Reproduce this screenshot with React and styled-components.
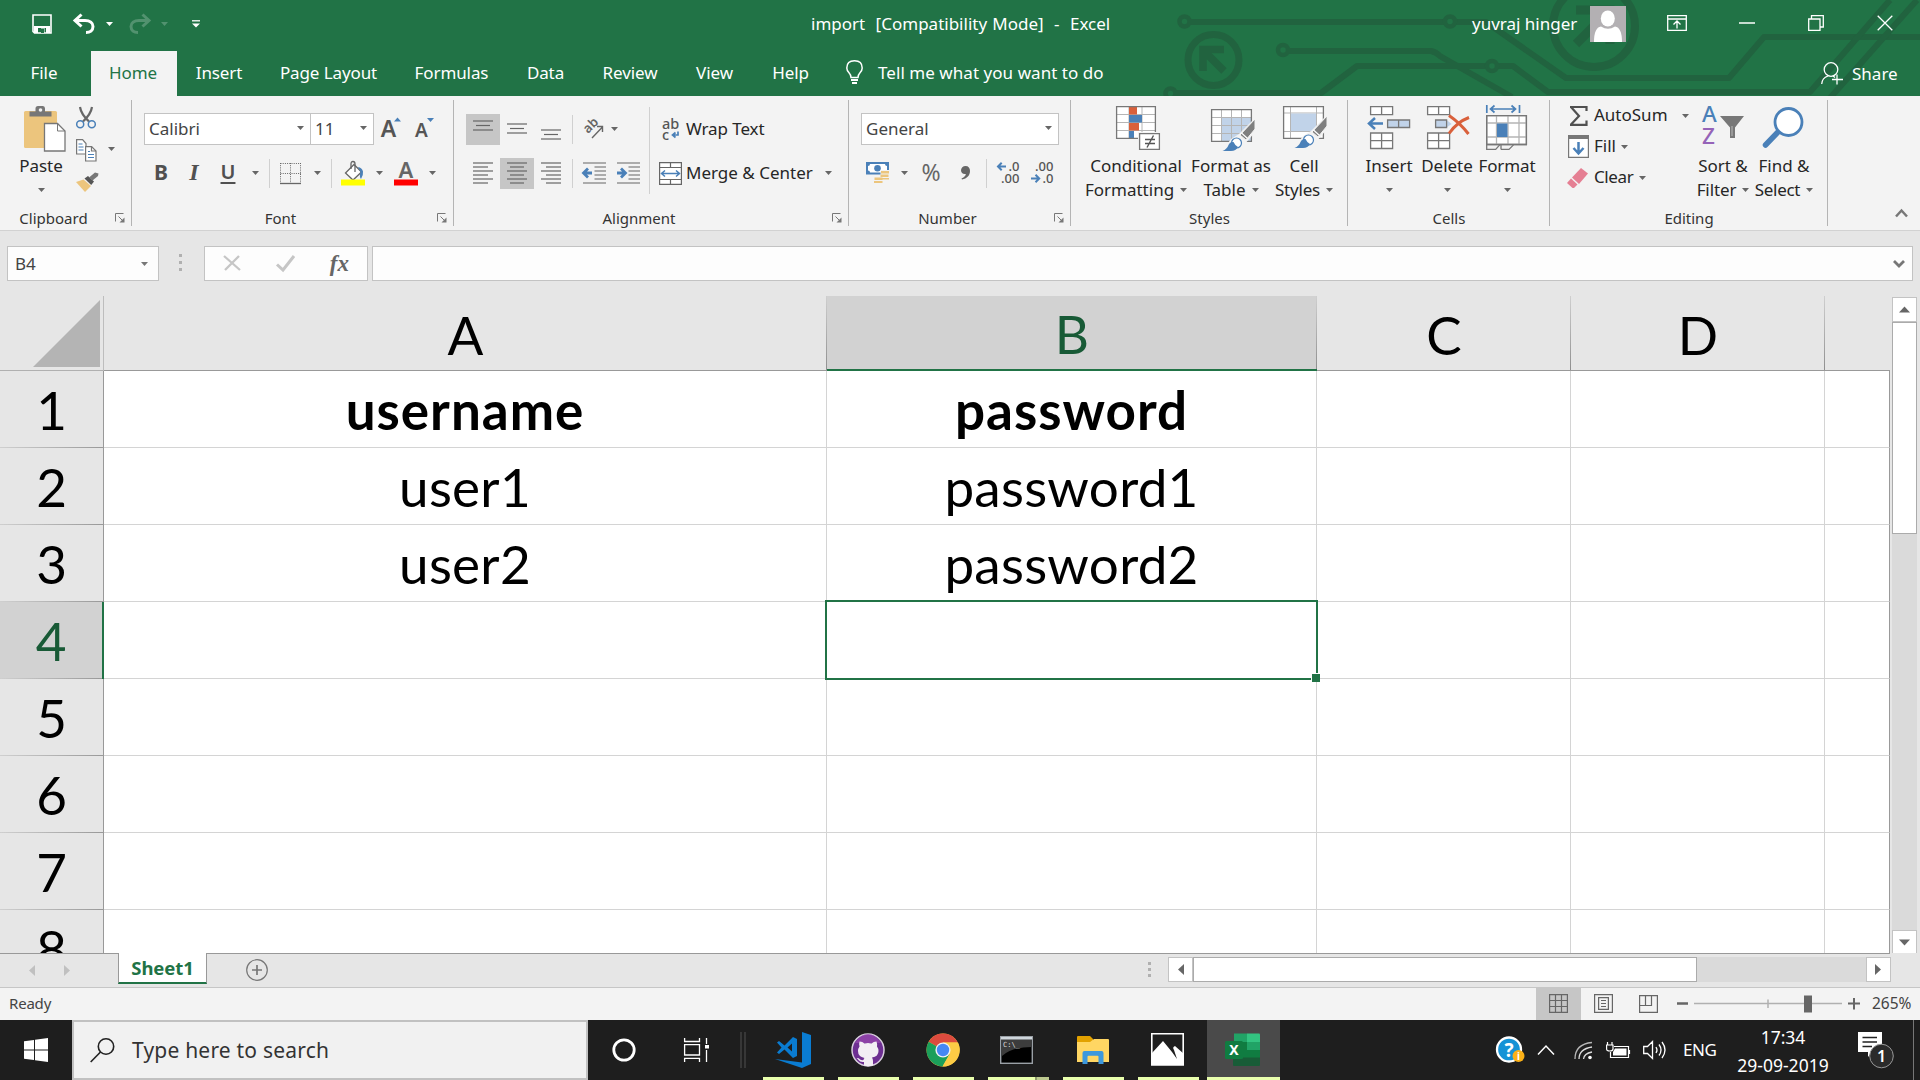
import React from "react";
import styled, { createGlobalStyle, css } from "styled-components";

const UI = `"Noto Sans", "Open Sans", sans-serif`;
const SHEET = `Lato, "Open Sans", sans-serif`;
const GREEN = "#217346";
const GREY = "#666666";
const BLUE = "#4a80b8";

const Global = createGlobalStyle`
  * { box-sizing: border-box; }
  html, body { margin: 0; padding: 0; overflow: hidden; }
  body { font-family: ${UI}; font-size: 17px; color: #262626; background: #e6e6e6; }
  svg { display: block; flex: none; overflow: visible; }
`;

const Screen = styled.div`
  width: 1920px;
  height: 1080px;
  display: flex;
  flex-direction: column;
  overflow: hidden;
`;

/* ---------- title area ---------- */
const Header = styled.header`
  position: relative;
  height: 96px;
  flex: none;
  background: ${GREEN};
  color: #fff;
  overflow: hidden;
`;
const Circuit = styled.svg`
  position: absolute;
  left: 0;
  top: 0;
`;
const HeaderContent = styled.div`
  position: relative;
  display: flex;
  flex-direction: column;
`;
const TitleBar = styled.div`
  height: 47px;
  display: flex;
  align-items: center;
`;
const QuickAccess = styled.div`
  width: 811px;
  display: flex;
  align-items: center;
  padding-left: 31px;
`;
const QuickIcon = styled.div`
  width: ${(p) => p.$w}px;
  margin-right: ${(p) => p.$mr || 0}px;
  opacity: ${(p) => (p.$dim ? 0.22 : 1)};
  display: flex;
  justify-content: center;
`;
const WindowTitle = styled.div`
  width: 661px;
  white-space: pre;
  letter-spacing: ${(p) => p.$ls || 0}px;
  word-spacing: 0.8px;
`;
const UserName = styled.div`
  width: 118px;
  white-space: nowrap;
`;
const Avatar = styled.div`
  width: 36px;
  height: 36px;
  background: #b3b0b3;
  overflow: hidden;
`;
const WindowButton = styled.div`
  width: ${(p) => p.$w}px;
  height: 47px;
  padding-bottom: 1px;
  display: flex;
  align-items: center;
  justify-content: center;
`;
const TabRow = styled.nav`
  height: 49px;
  display: flex;
  align-items: flex-end;
`;
const Tab = styled.div`
  width: ${(p) => p.$w}px;
  height: 45px;
  margin-left: ${(p) => p.$ml || 0}px;
  padding-bottom: 3px;
  display: flex;
  align-items: center;
  justify-content: center;
  white-space: nowrap;
  letter-spacing: ${(p) => p.$ls ?? -0.1}px;
  ${(p) => p.$active && css`background: #f3f3f3; color: ${GREEN}; padding-right: 2px;`}
`;
const TellMe = styled.div`
  height: 45px;
  width: 976px;
  padding-left: 18px;
  display: flex;
  align-items: center;
  gap: 15px;
  white-space: nowrap;
  padding-bottom: 3px;
  letter-spacing: 0.05px;
`;
const Share = styled.div`
  height: 45px;
  display: flex;
  align-items: center;
  gap: 9px;
  padding-left: 17px;
`;

/* ---------- ribbon ---------- */
const Ribbon = styled.section`
  height: 135px;
  flex: none;
  background: #f3f3f3;
  border-bottom: 1px solid #d2d2d2;
  display: flex;
`;
const Group = styled.div`
  width: ${(p) => p.$w}px;
  height: 134px;
  display: flex;
  flex-direction: column;
  background: linear-gradient(#b4b4b4, #b4b4b4) right 4px / 1px 126px no-repeat;
`;
const GroupBody = styled.div`
  height: 110px;
  display: flex;
  align-items: flex-start;
  padding-left: ${(p) => p.$pl || 0}px;
`;
const GroupFoot = styled.div`
  height: 24px;
  display: flex;
  align-items: center;
  font-size: 15px;
  color: #333;
`;
const GroupLabel = styled.div`
  flex: 1;
  text-align: center;
`;
const Launcher = styled.div`
  width: 25px;
  padding-left: 8px;
`;
const Stack = styled.div`
  width: ${(p) => p.$w}px;
  margin-left: ${(p) => p.$ml || 0}px;
  padding-top: ${(p) => p.$pt || 0}px;
  display: flex;
  flex-direction: column;
  flex: none;
  gap: ${(p) => p.$gap || 0}px;
`;
const ToolRow = styled.div`
  height: ${(p) => p.$h || 32}px;
  display: flex;
  align-items: center;
`;
const Tool = styled.div`
  width: ${(p) => p.$w || 34}px;
  height: 31px;
  margin-left: ${(p) => p.$ml || 0}px;
  padding-bottom: ${(p) => p.$pb || 0}px;
  display: flex;
  align-items: center;
  justify-content: center;
  flex: none;
  background: ${(p) => (p.$on ? "#c6c6c6" : "transparent")};
`;
const Rule = styled.div`
  width: 1px;
  height: ${(p) => p.$h || 29}px;
  margin-left: ${(p) => p.$ml || 0}px;
  margin-top: ${(p) => p.$mt || 0}px;
  background: #d0d0d0;
  flex: none;
`;
const Combo = styled.div`
  width: ${(p) => p.$w}px;
  height: 32px;
  margin-left: ${(p) => p.$ml || 0}px;
  border: 1px solid #c3c3c3;
  background: #fff;
  display: flex;
  align-items: center;
  justify-content: space-between;
  padding: 0 ${(p) => p.$pr || 6}px 2px 4px;
  color: #444;
`;
const ToolText = styled.div`
  width: ${(p) => p.$w}px;
  margin-left: ${(p) => p.$ml || 0}px;
  padding-bottom: 2px;
  white-space: nowrap;
  letter-spacing: ${(p) => p.$ls || 0}px;
`;
const BigButton = styled.div`
  width: ${(p) => p.$w}px;
  margin-left: ${(p) => p.$ml || 0}px;
  padding-top: 8px;
  display: flex;
  flex-direction: column;
  align-items: center;
  flex: none;
`;
const BigIcon = styled.div`
  height: 50px;
  display: flex;
  padding-left: ${(p) => p.$pl || 0}px;
`;
const BigLine = styled.div`
  height: 24px;
  line-height: 24px;
  display: flex;
  align-items: center;
  gap: 6px;
  white-space: nowrap;
  letter-spacing: ${(p) => p.$ls || 0}px;
`;
const Glyph = styled.span`
  font-family: ${(p) => p.$font || UI};
  font-size: ${(p) => p.$size || 20}px;
  font-weight: ${(p) => p.$weight || 400};
  font-style: ${(p) => p.$style || "normal"};
  text-decoration: ${(p) => (p.$under ? "underline" : "none")};
  text-decoration-thickness: 1.5px;
  text-underline-offset: 3px;
  color: ${(p) => p.$color || "#505050"};
  line-height: 1;
`;
const Collapse = styled.div`
  flex: 1;
  display: flex;
  align-items: flex-end;
  padding: 0 0 13px 67px;
`;

/* ---------- formula bar ---------- */
const FormulaBar = styled.div`
  height: 65px;
  flex: none;
  padding: 15px 7px 0;
  display: flex;
  background: #e6e6e6;
`;
const Field = styled.div`
  width: ${(p) => p.$w}px;
  height: 35px;
  margin-left: ${(p) => p.$ml || 0}px;
  padding: ${(p) => p.$pad || "0"};
  background: #fdfdfd;
  border: 1px solid #c3c3c3;
  display: flex;
  align-items: center;
  justify-content: ${(p) => p.$justify || "space-between"};
  color: #444;
`;
const Dots = styled.div`
  width: 3px;
  height: ${(p) => p.$h || 17}px;
  margin: ${(p) => p.$margin || "0"};
  display: flex;
  flex-direction: column;
  justify-content: space-between;
  &::before, &::after, i { content: ""; width: 3px; height: 3px; background: #b0b0b0; }
`;

/* ---------- worksheet ---------- */
const SheetArea = styled.main`
  height: 657px;
  flex: none;
  display: flex;
  background: #e6e6e6;
`;
const Grid = styled.div`
  width: 1890px;
  height: 657px;
  display: grid;
  grid-template-columns: 104px 723px 490px 254px 254px 65px;
  grid-template-rows: 75px repeat(7, 77px) 43px;
  overflow: hidden;
  font-family: ${SHEET};
  font-size: 53px;
  color: #000;
`;
const Corner = styled.div`
  border-bottom: 1px solid #b0b0b0;
  border-right: 1px solid #bdbdbd;
  padding: 4px 0 0 33px;
`;
const ColHead = styled.div`
  display: flex;
  align-items: center;
  justify-content: center;
  padding-top: 2px;
  line-height: 1;
  border-bottom: ${(p) => (p.$on ? `2px solid ${GREEN}` : "1px solid #999")};
  color: ${(p) => (p.$on ? "#185a36" : "#000")};
  background:
    ${(p) => (p.$last ? "" : "linear-gradient(#cfcfcf, #8f8f8f) right top / 1px 100% no-repeat,")}
    ${(p) => (p.$on ? "#d2d2d2" : "#e6e6e6")};
`;
const RowHead = styled.div`
  display: flex;
  align-items: flex-start;
  justify-content: center;
  padding-top: 12px;
  line-height: 1;
  border-right: ${(p) => (p.$on ? `2px solid ${GREEN}` : "1px solid #999")};
  color: ${(p) => (p.$on ? "#185a36" : "#000")};
  overflow: hidden;
  background:
    linear-gradient(90deg, #cfcfcf, #999) left bottom / 100% ${(p) => (p.$cut ? 0 : 1)}px no-repeat,
    ${(p) => (p.$on ? "#d2d2d2" : "#e6e6e6")};
`;
const Cell = styled.div`
  position: relative;
  display: flex;
  align-items: flex-start;
  justify-content: center;
  padding-top: 12px;
  line-height: 1;
  background: #fff;
  border-right: 1px solid ${(p) => (p.$last ? "#999" : "#d4d4d4")};
  border-bottom: ${(p) => (p.$cut ? 0 : 1)}px solid #d4d4d4;
  font-weight: ${(p) => (p.$bold ? 700 : 400)};
  letter-spacing: ${(p) => (p.$bold ? 1 : 0.25)}px;
`;
const Selection = styled.div`
  position: absolute;
  left: -2px;
  top: -2px;
  width: 493px;
  height: 80px;
  border: 2px solid ${GREEN};
  z-index: 2;
  &::after {
    content: "";
    position: absolute;
    right: -4px;
    bottom: -4px;
    width: 8px;
    height: 8px;
    background: ${GREEN};
    border: 1px solid #fff;
    border-width: 1px 0 0 1px;
  }
`;
const VScroll = styled.div`
  width: 25px;
  margin: 1px 0 0 2px;
  height: 658px;
  display: flex;
  flex-direction: column;
  background: #dadada;
`;
const ScrollButton = styled.div`
  width: 25px;
  height: 25px;
  flex: none;
  background: #fff;
  border: 1px solid #c3c3c3;
  display: flex;
  align-items: center;
  justify-content: center;
`;
const Thumb = styled.div`
  width: ${(p) => p.$w}px;
  height: ${(p) => p.$h}px;
  flex: none;
  background: #fff;
  border: 1px solid #ababab;
`;
const SheetBar = styled.div`
  height: 35px;
  flex: none;
  background: linear-gradient(#999, #999) left top / 1890px 1px no-repeat, #e6e6e6;
  border-bottom: 1px solid #c6c6c6;
  display: flex;
  align-items: flex-start;
`;
const SheetTabs = styled.div`
  width: 1148px;
  height: 34px;
  display: flex;
  align-items: flex-start;
`;
const SheetNav = styled.div`
  width: 118px;
  padding: 12px 0 0 29px;
  display: flex;
  gap: 29px;
`;
const SheetTab = styled.div`
  width: 89px;
  height: 31px;
  background: #fff;
  border: 1px solid #999;
  border-top: 0;
  border-bottom: 2px solid ${GREEN};
  color: ${GREEN};
  font-weight: 700;
  font-size: 18.5px;
  letter-spacing: -0.1px;
  display: flex;
  align-items: center;
  justify-content: center;
`;
const AddSheet = styled.div`
  padding: 6px 0 0 39px;
`;
const HScrollArea = styled.div`
  height: 34px;
  display: flex;
`;
const HScroll = styled.div`
  width: 723px;
  height: 25px;
  margin: 4px 0 0 17px;
  display: flex;
  background: #dadada;
`;
const Spring = styled.div`
  flex: 1;
`;

/* ---------- status bar ---------- */
const StatusBar = styled.div`
  height: 32px;
  flex: none;
  background: #f3f3f3;
  display: flex;
  align-items: center;
  font-size: 15px;
  color: #444;
`;
const Ready = styled.div`
  width: 1536px;
  padding: 0 0 2px 9px;
  letter-spacing: -0.2px;
`;
const ViewButton = styled.div`
  width: 45px;
  height: 32px;
  padding-bottom: 1px;
  display: flex;
  align-items: center;
  justify-content: center;
  background: ${(p) => (p.$on ? "#c6c6c6" : "transparent")};
`;
const Zoom = styled.div`
  width: 201px;
  padding: 0 0 1px 6px;
`;
const Percent = styled.div`
  white-space: nowrap;
  padding-bottom: 2px;
  font-size: 15.5px;
  letter-spacing: 0;
`;

/* ---------- taskbar ---------- */
const TaskBar = styled.footer`
  height: 60px;
  flex: none;
  background: #1e1e1e;
  color: #fff;
  display: flex;
`;
const Start = styled.div`
  width: 72px;
  display: flex;
  align-items: center;
  justify-content: center;
`;
const Search = styled.div`
  width: 516px;
  height: 60px;
  background: #f1f1f1;
  border: 2px solid #c1c1c1;
  padding-left: 16px;
  display: flex;
  align-items: center;
  gap: 17px;
  font-size: 21px;
  letter-spacing: ${(p) => p.$ls || 0}px;
  color: #333;
`;
const TaskIcon = styled.div`
  width: ${(p) => p.$w}px;
  margin-left: ${(p) => p.$ml || 0}px;
  padding-right: ${(p) => p.$pr || 0}px;
  height: 60px;
  display: flex;
  align-items: center;
  justify-content: center;
  flex: none;
`;
const TaskApp = styled.div`
  width: ${(p) => (p.$on ? 73 : 61)}px;
  margin-right: ${(p) => (p.$on ? 0 : p.$mr ?? 14)}px;
  padding-right: ${(p) => p.$pr ?? 1}px;
  padding-bottom: 1px;
  height: 60px;
  flex: none;
  display: flex;
  align-items: center;
  justify-content: center;
  background:
    linear-gradient(90deg, #e9ffad ${(p) => (p.$split ? "47px" : "100%")}, #8e9c6c ${(p) => (p.$split ? "47px" : "100%")}, #8e9c6c 49px, #bdc98f 49px) left bottom / 100% 3px no-repeat,
    ${(p) => (p.$on ? "#4a4a4a" : "transparent")};
`;
const Clock = styled.div`
  width: 96px;
  margin-left: 17px;
  padding-top: 3px;
  text-align: center;
  line-height: 28px;
  font-size: 17.5px;
  letter-spacing: ${(p) => p.$ls || 0}px;
  white-space: nowrap;
`;
const Language = styled.div`
  width: 35px;
  margin-left: 17px;
  line-height: 60px;
  font-size: 17px;
  letter-spacing: ${(p) => p.$ls || 0}px;
`;
const ShowDesktop = styled.div`
  width: 7px;
  margin-left: auto;
  border-left: 1px solid #777;
`;

/* ---------- drawings ---------- */
const Down = ({ w = 7, color = GREY }) => (
  <svg width={w} height={4} viewBox="0 0 7 4"><path d="M0 0h7L3.5 4z" fill={color} /></svg>
);
const Tri = ({ d, color = GREY, w = 11, h = 11 }) => (
  <svg width={w} height={h}><path d={d} fill={color} /></svg>
);
const Lines = ({ rows, color = "#666" }) => (
  <svg width="20" height="22" fill="none" stroke={color} strokeWidth="1.2">
    {rows.map(([y, a, b]) => <path key={y} d={`M${a} ${y}H${b}`} />)}
  </svg>
);
const CircuitArt = () => (
  <Circuit width="1920" height="96" fill="none" stroke="#21633f" strokeWidth="6">
    <circle cx="1184.500" cy="21.500" r="5" strokeWidth="4.500" />
    <path d="M1190 22H1444M1456 22H1486L1566 78H1729L1764 37H1920" strokeLinejoin="round" />
    <circle cx="1450" cy="21.500" r="5" strokeWidth="4.500" />
    <circle cx="1283" cy="50" r="5" strokeWidth="4.500" />
    <path d="M1289 51H1431Q1436 52 1440 56L1512 97" />
    <circle cx="1170.500" cy="93.500" r="5" strokeWidth="4.500" />
    <path d="M1177 93H1321L1357 66H1486M1498 66H1513L1548 92H1810L1890 0M1830 98L1917 0" strokeLinejoin="round" />
    <circle cx="1492" cy="66" r="5" strokeWidth="4.500" />
    <circle cx="1213.500" cy="60" r="25.500" strokeWidth="7" />
    <path d="M1203 71V49.500H1224M1203 50L1224 71" strokeWidth="7.500" />
    <circle cx="1594" cy="26" r="41" strokeWidth="8" />
    <path d="M1576 10H1610V44M1608 12L1576 44" strokeWidth="9" />
  </Circuit>
);
const SaveIcon = () => (
  <svg width="20" height="20"><path d="M1 1h18v18H2.500L1 17.500z" fill="none" stroke="#fff" strokeWidth="1.600" /><path d="M2 12h16v7H14v-5H12.500v5H9v-5H6v5H2z" fill="#fff" /><path d="M9 14.500h3v4.500H9z" fill={GREEN} /></svg>
);
const UndoIcon = ({ flip }) => (
  <svg width="22" height="20" viewBox="0 0 22 20"><g transform={flip ? "translate(22 0) scale(-1 1)" : undefined} fill="none" stroke="#fff" strokeWidth="3"><path d="M8.500 .5L2 6.500l6.500 6" /><path d="M3 6.500H12c5 0 8 2.500 8 6 0 4-3 6-7 6" /></g></svg>
);
const LauncherIcon = () => (
  <svg width="10" height="10" fill="none" stroke="#777"><path d="M.5 8.500V.5H8.500M3.500 3.500L8 8" /><path d="M9.500 4.500v5h-5z" fill="#777" stroke="none" /></svg>
);
const PasteIcon = () => (
  <svg width="42" height="46"><rect x="0" y="5" width="33" height="37" rx="1.500" fill="#ecc57d" /><path d="M5.500 10.500V5.500h6V2.500Q11.500 0 14 0h5Q21 0 21 2.500v3h6.500v5z" fill="#777" /><circle cx="16.500" cy="4" r="1.800" fill="#f3f3f3" /><path d="M20.500 17.500h13l7.500 7.500v20H20.500z" fill="#fff" stroke="#777" strokeWidth="1.300" /><path d="M33.500 17.500V25H41" fill="none" stroke="#777" /></svg>
);
const ScissorIcon = () => (
  <svg width="20" height="22" fill="none"><path d="M4 0Q5 7 13 14.500M16 0Q15 7 7 14.500" stroke="#666" strokeWidth="2.200" /><circle cx="4.200" cy="17.300" r="3.500" stroke={BLUE} strokeWidth="1.500" /><circle cx="15.800" cy="17.300" r="3.500" stroke={BLUE} strokeWidth="1.500" /></svg>
);
const CopyIcon = () => (
  <svg width="21" height="23" fill="#fff" stroke="#777" strokeWidth="1.200"><path d="M.6.6h6L10 4.500V15H.6z" /><path d="M2.500 5h4M2.500 8h5M2.500 11h5" stroke={BLUE} /><path d="M9.600 7.600h6l4.400 4.500V22H9.600z" /><path d="M15.500 7.600V12H20" fill="none" /><path d="M12 12.500h2M12 15.500h6M12 18.500h6" stroke={BLUE} /></svg>
);
const PainterIcon = () => (
  <svg width="23" height="20"><path d="M0 10L7.500 7.500 15 14 9 20z" fill="#ecc57d" /><path d="M8.500 6.500L12 4l6 5.500-2.800 3.500z" fill="#555" /><path d="M13 5.500L19 0.500l3.500 1L22 4 16.500 8.500z" fill="#777" /></svg>
);
const BordersIcon = () => (
  <svg width="21" height="21" stroke="#666" fill="none"><path d="M.5 .5H21M.5 10.500H21M.5 0V20M10.500 0V20M20.500 0V20" strokeDasharray="1 1.200" /><path d="M0 20.500H21" strokeWidth="1.300" /></svg>
);
const FillColorIcon = () => (
  <svg width="24" height="25"><path d="M13 3.500l7.500 7.500-8.500 8L4.500 12z" fill="#fff" stroke="#666" strokeWidth="1.300" /><path d="M10 8V3q0-2.500 2-2.500T14 3v8" fill="none" stroke="#666" strokeWidth="1.300" /><path d="M17 6q4 .5 5 4.500.5 4-2 7.500-2-2.500-.5-7z" fill={BLUE} /><path d="M0 18.500h24v6H0z" fill="#ff0" /></svg>
);
const FontColorIcon = () => (
  <svg width="24" height="25"><text x="12" y="17" textAnchor="middle" fontFamily="Noto Sans" fontWeight="600" fontSize="22" fill="#666">A</text><path d="M0 18.500h24v6H0z" fill="red" /></svg>
);
const GrowIcon = ({ small }) => (
  <svg width="24" height="24"><text x="8.500" y="20" textAnchor="middle" fontFamily="Noto Sans" fontWeight="600" fontSize={small ? 19 : 23} fill="#555">A</text><path d={small ? "M14 1h7l-3.500 4z" : "M14 4.500h7L17.500.5z"} fill={BLUE} /></svg>
);
const OrientIcon = () => (
  <svg width="22" height="22"><text transform="translate(5 16) rotate(-45)" fontFamily="Noto Sans" fontWeight="600" fontSize="13" fill="#666">ab</text><path d="M9 20L19 9.500M14 8.500h5.500V14" fill="none" stroke="#666" strokeWidth="1.400" /></svg>
);
const IndentIcon = ({ right }) => (
  <svg width="23" height="22" fill="none" stroke="#666" strokeWidth="1.200"><path d="M0 1H23M11.500 5H23M11.500 9H23M11.500 13H23M11.500 17H23M0 21H23" /><path d={right ? "M0 11H7M4 6.500L8.500 11 4 15.500" : "M9 11H2M5 6.500L.5 11 5 15.500"} stroke={BLUE} strokeWidth="2.800" /></svg>
);
const WrapIcon = () => (
  <svg width="18" height="22" fontFamily="Noto Sans" fontWeight="500" fontSize="14.500" fill="#555"><text x="0" y="10.500">ab</text><text x="0" y="21.500">c</text><path d="M16 13.500V17h-5M13.500 14.500L10.500 17l3 2.500" fill="none" stroke={BLUE} strokeWidth="1.700" /></svg>
);
const MergeIcon = () => (
  <svg width="23" height="23" fill="#fff" stroke="#666" strokeWidth="1.200"><path d="M.6.6H22.400V22.400H.6zM.6 5.500H22.400M.6 17.500H22.400M11.500 .6V5.500M11.500 17.500V22" /><path d="M3 11.500H20M6 8.500L2.500 11.500 6 14.500M17 8.500l3.500 3-3.500 3" stroke={BLUE} fill="none" strokeWidth="1.500" /></svg>
);
const MoneyIcon = () => (
  <svg width="24" height="23"><rect width="23" height="12.500" fill={BLUE} /><path d="M2 4q2 0 2-2h15q0 2 2 2v4.500q-2 0-2 2H4q0-2-2-2z" fill="#fff" /><circle cx="11.500" cy="6.300" r="3.300" fill={BLUE} /><path d="M14.500 8h9v10h-9zM8 15h9.500v7H8z" fill="#f3f3f3" /><path d="M15 9h8v2.500h-8zM14.500 12.500h8V15h-8zM15 16h8v1.500h-8zM8.500 15.500h8V18h-8zM8 19h8.500v2H8z" fill="#ecc57d" /></svg>
);
const CommaIcon = () => (
  <svg width="9" height="14"><path d="M4.500 0C7.500 0 9 2 9 5 9 9.500 6 12.500 1 13.500L.5 12.500C3.500 11 4.800 9.500 4.800 8 2 8.500 0 7 0 4.300 0 2 2 0 4.500 0z" fill="#666" /></svg>
);
const DecimalIcon = ({ dec }) => (
  <svg width="23" height="24" fontFamily="Noto Sans" fontSize="13" fill="#555" fontWeight="500">
    <text x="22.500" y="10" textAnchor="end">{dec ? ".00" : ".0"}</text>
    <text x="22.500" y="22" textAnchor="end">{dec ? ".0" : ".00"}</text>
    <path d={dec ? "M0 17.500H7M4.500 13.800L8.200 17.500 4.500 21.200" : "M9 5.500H2M4.700 1.800L1 5.500 4.700 9.200"} stroke={BLUE} strokeWidth="2" fill="none" />
  </svg>
);
const Brush = () => (
  <g><path d="M44 10L44 20 35 31 29 26z" fill="#7f7f7f" stroke="#f3f3f3" strokeWidth="1" /><path d="M30.500 24l6 5.500" stroke="#fff" strokeWidth="1.200" /><circle cx="25.500" cy="34" r="5" fill="#fff" stroke={BLUE} strokeWidth="1.200" /><path d="M11.500 42Q16 40 17.500 36 19 32.500 22.500 33 24 36.500 27 38 25 42 20 42z" fill={BLUE} /></g>
);
const CondIcon = () => (
  <svg width="44" height="45"><path d="M.6.6H39.400V32.400H.6z" fill="#fff" /><path d="M1 8.500H39M1 16.500H39M1 24.500H39M13 1V32M26 1V32" stroke="#b5b5b5" /><path d="M13 1h8v7.500h-8zM13 17h10v7.500H13z" fill="#d9603b" /><path d="M13 9h13v7.500H13zM13 25h5v7H13z" fill={BLUE} /><path d="M.6.6H39.400V32.400H.6z" fill="none" stroke="#777" strokeWidth="1.300" /><path d="M22 26h22v19H22z" fill="#f3f3f3" /><path d="M23.600 27.600h19.800v15.800H23.600z" fill="#fff" stroke="#777" strokeWidth="1.300" /><path d="M29 33.500H39M29 37.500H39M37.500 29.500L31 41.500" stroke="#555" strokeWidth="1.400" /></svg>
);
const FormatTableIcon = () => (
  <svg width="44" height="46"><g transform="translate(0 3)"><path d="M.6.6H40.400V32.400H.6z" fill="#fff" /><path d="M10.500 8.500H40V32H10.500z" fill="#c1d3e9" /><path d="M1 8.500H40M1 16.500H40M1 24.500H40M10.500 1V32M20.500 1V32M30.500 1V32" stroke="#b5b5b5" /><path d="M.6.6H40.400V32.400H.6z" fill="none" stroke="#777" strokeWidth="1.300" /><path d="M44 9l-16 16-8 5-9 12 12 0 10-6 12-14z" fill="#f3f3f3" /><Brush /></g></svg>
);
const CellStylesIcon = () => (
  <svg width="44" height="45"><path d="M.6.6H40.400V32.400H.6z" fill="#fff" /><path d="M1 7H40M1 25.500H40M7.500 1V32M33.500 1V32" stroke="#b5b5b5" /><path d="M8 7.500H33V25H8z" fill="#c1d3e9" /><path d="M.6.6H40.400V32.400H.6z" fill="none" stroke="#777" strokeWidth="1.300" /><path d="M44 9l-16 16-8 5-9 12 12 0 10-6 12-14z" fill="#f3f3f3" /><Brush /></svg>
);
const InsertIcon = () => (
  <svg width="44" height="45" fill="#fff" stroke="#777" strokeWidth="1.300"><path d="M3.600.6h22v8h-22zM14.600.6v8M3.600 27h22v15.500h-22zM14.600 27v15.500M3.600 34.700h22" /><path d="M20.600 14h22v7.500h-22zM31.600 14v7.500" fill="#c1d3e9" /><path d="M16 17.500H2.500M8 12L2 17.500 8 23" fill="none" stroke={BLUE} strokeWidth="2.500" /></svg>
);
const DeleteIcon = () => (
  <svg width="44" height="45" fill="#fff" stroke="#777" strokeWidth="1.300"><path d="M.6.6h22v8h-22zM11.600.6v8M.6 27h22v15.500h-22zM11.600 27v15.500M.6 34.700h22" /><path d="M8.600 14h11l5 4-5 3.500h-11z" fill="#c1d3e9" stroke="none" /><path d="M19.600 14h-11v7.500h11z" fill="#c1d3e9" /><path d="M22 9.500Q33 17 41.500 28M42 11.500Q30 16 22 27.500" stroke="#d9603b" strokeWidth="3" fill="none" /></svg>
);
const FormatIcon = () => (
  <svg width="42" height="46" fill="none" stroke="#777" strokeWidth="1.300"><path d="M.7 10.600H40.400V39.500H.7z" fill="#fff" /><path d="M1 18H40M1 32H40M10.500 11V39M22 11V39M33 11V39" stroke="#b5b5b5" /><path d="M11 18.500h10.500v13.500H11z" fill={BLUE} stroke="none" /><path d="M.7 10.600H40.400V39.500H.7z" /><path d="M.7 40v4.400h9l4-4.500M15 44.400h8l4.500-4.500M15 40v4.400" /><path d="M.8 0V8M33.500 0V8M5 4H29M8.500 .5L4.500 4l4 3.500M25.500.5l4 3.500-4 3.500" stroke={BLUE} strokeWidth="1.700" /></svg>
);
const SigmaIcon = () => (
  <svg width="19" height="20"><path d="M1 1H17.500V5M2 1L10 10 2 18.500M1 18.800H17.500V14.500" fill="none" stroke="#505050" strokeWidth="2.200" /></svg>
);
const FillIcon = () => (
  <svg width="21" height="23"><path d="M.6.6h19.800v21.800H.6z" fill="#fff" stroke="#777" strokeWidth="1.200" /><path d="M0 0h21v4H0z" fill="#777" /><path d="M10.500 7V18M5.500 13l5 5.500 5-5.500" fill="none" stroke={BLUE} strokeWidth="2.500" /></svg>
);
const ClearIcon = () => (
  <svg width="22" height="20"><path d="M14 0l7 5.500L12 16 5 9.500z" fill="#e57f93" /><path d="M4 10.500l6.500 6L7 20H5.500L0 15z" fill="#e57f93" /></svg>
);
const SortIcon = () => (
  <svg width="42" height="42" fontFamily="Noto Sans" fontWeight="500" fontSize="22.500"><text x="0" y="16" fill={BLUE}>A</text><text x="0" y="38" fill="#9563b8">Z</text><path d="M18 10H42L33 21.500V32H28V21.500z" fill="#777" /><path d="M30 20V30" stroke="#bbb" /></svg>
);
const FindIcon = () => (
  <svg width="42" height="42"><path d="M15 25L2.500 38" stroke={BLUE} strokeWidth="5.500" strokeLinecap="round" /><circle cx="25.500" cy="15" r="13.500" fill="#fff" stroke={BLUE} strokeWidth="2.800" /></svg>
);
const VSCode = () => (
  <svg width="36" height="36"><path d="M27 0l9 3v29l-9 4L0 27l27 3.500z" fill="#0a7cd1" /><path d="M18 5L22 7V24L18 26 9.500 17.500 4 22 2 20.500 6.500 15.500 2 10.500 4 9l5.500 4.500zM17 11.500L12.500 15.500 17 19.500z" fill="#0a7cd1" fillRule="evenodd" /></svg>
);
const GitHub = () => (
  <svg width="34" height="34"><circle cx="17" cy="17" r="16" fill="#6d2f92" stroke="#d9d0de" strokeWidth="1.500" /><path d="M4 10Q10 1 17 1t13 9z" fill="#9a49b0" opacity=".7" /><path d="M8.500 8.500q3 0 5 2 3.500-.8 7 0 2-2 5-2 1 2.500.5 5 1.500 2 1.500 4.500 0 5.500-6.500 6.500Q22 26 22 28v4.500q-5 1.500-9 0V29q-4 .5-5.500-2-1-1.500-2-2 2-.5 3 1t4 1q.2-1.500 1-2Q7 23.500 7 18q0-2.500 1.500-4.500-.8-2.500 0-5z" fill="#f2eef4" /></svg>
);
const Chrome = () => (
  <svg width="34" height="34" viewBox="-17 -17 34 34"><circle r="16.500" fill="#f9cb42" /><path d="M0 0L-14.300-8.300A16.500 16.500 0 0 1 14.300-8.300L15-7.500H0z" fill="#dd4b3e" /><path d="M-14.300-8.300A16.500 16.500 0 0 0-.5 16.500L7 4 0 0z" fill="#1b9f5a" /><path d="M0-7.500H15A16.500 16.500 0 0 1-.5 16.500L6.500 4z" fill="#fdcc45" /><circle r="7.600" fill="#f1f1f1" /><circle r="6.200" fill="#4688f4" /></svg>
);
const Cmd = () => (
  <svg width="33" height="28"><rect x=".7" y=".7" width="31.600" height="26.600" fill="#000" stroke="#9aa0a6" strokeWidth="1.400" /><path d="M1.500 3h30v8Q12 11 2 20z" fill="#3c3c3c" /><path d="M1 1h31v2.500H1z" fill="#cfd6dc" /><text x="3" y="11" fontFamily="DejaVu Sans Mono" fontSize="7" fill="#ddd">C:\_</text></svg>
);
const Explorer = () => (
  <svg width="34" height="28"><path d="M1 1Q1 0 2 0H14L17 3V8H1z" fill="#e2a100" /><path d="M1 6H14L18 3H32q1 0 1 1V26H1z" fill="#ffd663" /><path d="M6.500 28V17q0-2 2-2h17q2 0 2 2V28h-5v-7.500q0-.8-1-.8h-9q-1 0-1 .8V28z" fill="#3d98dc" /></svg>
);
const Photos = () => (
  <svg width="33" height="33"><path d="M.8.8H32.200V32H.8z" fill="none" stroke="#fff" strokeWidth="1.600" /><path d="M1 20L12 8l9 11 5 7-3-9q-2-3 1-4l9 8V32H1z" fill="#fff" /></svg>
);
const ExcelIcon = () => (
  <svg width="35" height="34"><path d="M9 .5H22V9H9z" fill="#21a366" /><path d="M22 .5H34q1 0 1 1V9H22z" fill="#33c481" /><path d="M9 9H22v8H9z" fill="#107c41" /><path d="M22 9H35v8H22z" fill="#21a366" /><path d="M8 17H35v8H8z" fill="#107c41" /><path d="M8 24.500H35V32q0 1-1 1H9q-1 0-1-1z" fill="#185c37" /><rect x="0" y="8" width="18" height="18" rx="1.500" fill="#107c41" /><text x="9" y="22" textAnchor="middle" fontFamily="Noto Sans" fontWeight="700" fontSize="14" fill="#fff">X</text></svg>
);

const Launch = () => <Launcher><LauncherIcon /></Launcher>;

const rows = [
  ["1", "username", "password"],
  ["2", "user1", "password1"],
  ["3", "user2", "password2"],
  ["4"], ["5"], ["6"], ["7"], ["8"],
];
const left = [[1, 0, 20], [5, 0, 15], [9, 0, 20], [13, 0, 15], [17, 0, 20], [21, 0, 15]];
const center = [[1, 0, 20], [5, 3, 17], [9, 0, 20], [13, 3, 17], [17, 0, 20], [21, 3, 17]];
const right = [[1, 0, 20], [5, 5, 20], [9, 0, 20], [13, 5, 20], [17, 0, 20], [21, 5, 20]];

export default function App() {
  return (
    <Screen>
      <Global />
      <Header>
        <CircuitArt />
        <HeaderContent>
          <TitleBar>
            <QuickAccess>
              <QuickIcon $w={21} $mr={21}><SaveIcon /></QuickIcon>
              <QuickIcon $w={22} $mr={11}><UndoIcon /></QuickIcon>
              <QuickIcon $w={7} $mr={16}><Down color="#fff" /></QuickIcon>
              <QuickIcon $w={22} $mr={10} $dim><UndoIcon flip /></QuickIcon>
              <QuickIcon $w={7} $mr={24} $dim><Down color="#fff" /></QuickIcon>
              <QuickIcon $w={8}><svg width="8" height="8"><path d="M0 .8H8" stroke="#fff" strokeWidth="1.300" /><path d="M0 3.500H8L4 7.500z" fill="#fff" /></svg></QuickIcon>
            </QuickAccess>
            <WindowTitle $ls={0}>{"import  [Compatibility Mode]  -  Excel"}</WindowTitle>
            <UserName>yuvraj hinger</UserName>
            <Avatar><svg width="36" height="36"><ellipse cx="17.800" cy="12.500" rx="7" ry="8" fill="#fff" /><path d="M4 36Q4 21.500 11 20.500q7 4.500 14 0 7 1 7 15.500z" fill="#fff" /></svg></Avatar>
            <WindowButton $w={102}><svg width="20" height="16" fill="none" stroke="#fff" strokeWidth="1.300"><path d="M.7.7H19.300V15.300H.7zM.7 4H19.300M10 13.500V6.500M6.500 9.500L10 6l3.500 3.500" /></svg></WindowButton>
            <WindowButton $w={38}><svg width="16" height="2"><path d="M0 1H16" stroke="#fff" strokeWidth="1.500" /></svg></WindowButton>
            <WindowButton $w={100}><svg width="16" height="16" fill="none" stroke="#fff" strokeWidth="1.300"><path d="M.7 4H12V15.300H.7zM3.500 4V.7H15.300V12H12" /></svg></WindowButton>
            <WindowButton $w={38}><svg width="16" height="16" stroke="#fff" strokeWidth="1.300"><path d="M.7.7L15.300 15.300M15.300.7L.7 15.300" /></svg></WindowButton>
          </TitleBar>
          <TabRow>
            <Tab $w={88}>File</Tab>
            <Tab $w={86} $ml={3} $active>Home</Tab>
            <Tab $w={84}>Insert</Tab>
            <Tab $w={135}>Page Layout</Tab>
            <Tab $w={111}>Formulas</Tab>
            <Tab $w={77}>Data</Tab>
            <Tab $w={92}>Review</Tab>
            <Tab $w={77}>View</Tab>
            <Tab $w={75}>Help</Tab>
            <TellMe>
              <svg width="17" height="24" fill="none" stroke="#fff" strokeWidth="1.500"><path d="M5 17.500Q5 15 3 12.800 .8 10.500.8 8 .8 .8 8.500.8T16.200 8q0 2.500-2.200 4.800-2 2.200-2 4.700z" /><path d="M5 20H12M6 23H11" strokeWidth="1.800" /></svg>
              Tell me what you want to do
            </TellMe>
            <Share>
              <svg width="22" height="23" fill="none" stroke="#fff" strokeWidth="1.300"><circle cx="10" cy="7.500" r="6.800" /><path d="M.7 22Q1 16 7 14M16 12.500v10M11 17.500h11M12 14l2 1.500" /></svg>
              Share
            </Share>
          </TabRow>
        </HeaderContent>
      </Header>

      <Ribbon>
        <Group $w={132}>
          <GroupBody>
            <BigButton $w={64} $ml={9}>
              <BigIcon $pl={7}><svg width="42" height="48"><g transform="translate(0 2)"><PasteIcon /></g></svg></BigIcon>
              <BigLine>Paste</BigLine>
              <BigLine><Down /></BigLine>
            </BigButton>
            <Stack $w={50} $ml={3} $pt={11}>
              <ToolRow $h={22}><ScissorIcon /></ToolRow>
              <ToolRow $h={42}><CopyIcon /><ToolText $w={7} $ml={11}><Down /></ToolText></ToolRow>
              <ToolRow $h={22}><PainterIcon /></ToolRow>
            </Stack>
          </GroupBody>
          <GroupFoot><GroupLabel>Clipboard</GroupLabel><Launch /></GroupFoot>
        </Group>

        <Group $w={322}>
          <GroupBody $pl={12}>
            <Stack $w={300} $pt={17} $gap={12}>
              <ToolRow>
                <Combo $w={167}>Calibri<Down /></Combo>
                <Combo $w={64} $ml={-1}>11<Down /></Combo>
                <Tool $w={30} $ml={3}><GrowIcon /></Tool>
                <Tool $w={30} $ml={3}><GrowIcon small /></Tool>
              </ToolRow>
              <ToolRow>
                <Tool $pb={2}><Glyph $weight={700} $size={21}>B</Glyph></Tool>
                <Tool $ml={-1} $pb={2}><Glyph $style="italic" $font={`"Liberation Serif", serif`} $size={24} $weight={700}>I</Glyph></Tool>
                <Tool $pb={2}><Glyph $under $size={20} $weight={600}>U</Glyph></Tool>
                <Tool $w={20}><Down /></Tool>
                <Rule $ml={4} />
                <Tool $w={32} $ml={4}><BordersIcon /></Tool>
                <Tool $w={23}><Down /></Tool>
                <Rule $ml={2} />
                <Tool $ml={4}><FillColorIcon /></Tool>
                <Tool $w={19}><Down /></Tool>
                <Tool><FontColorIcon /></Tool>
                <Tool $w={19}><Down /></Tool>
              </ToolRow>
            </Stack>
          </GroupBody>
          <GroupFoot><GroupLabel>Font</GroupLabel><Launch /></GroupFoot>
        </Group>

        <Group $w={395}>
          <GroupBody $pl={12}>
            <Stack $w={183} $pt={17} $gap={12}>
              <ToolRow>
                <Tool $on><Lines rows={[[3, 0, 20], [7.5, 3, 17], [12, 0, 20]]} /></Tool>
                <Tool><Lines rows={[[6, 0, 20], [10.5, 3, 17], [15, 0, 20]]} /></Tool>
                <Tool><Lines rows={[[12, 0, 20], [16.5, 3, 17], [21, 0, 20]]} /></Tool>
                <Rule $ml={4} />
                <Tool $w={30} $ml={6}><OrientIcon /></Tool>
                <Tool $w={11}><Down /></Tool>
              </ToolRow>
              <ToolRow>
                <Tool><Lines rows={left} /></Tool>
                <Tool $on><Lines rows={center} /></Tool>
                <Tool><Lines rows={right} /></Tool>
                <Rule $ml={4} />
                <Tool $ml={4}><IndentIcon /></Tool>
                <Tool><IndentIcon right /></Tool>
              </ToolRow>
            </Stack>
            <Rule $h={87} $mt={11} />
            <Stack $w={180} $ml={9} $pt={17} $gap={12}>
              <ToolRow>
                <Tool $w={23}><WrapIcon /></Tool>
                <ToolText $w={90} $ml={4} $ls={-0.1}>Wrap Text</ToolText>
              </ToolRow>
              <ToolRow>
                <Tool $w={23}><MergeIcon /></Tool>
                <ToolText $w={139} $ml={4}>Merge &amp; Center</ToolText>
                <Down />
              </ToolRow>
            </Stack>
          </GroupBody>
          <GroupFoot><GroupLabel>Alignment</GroupLabel><Launch /></GroupFoot>
        </Group>

        <Group $w={222}>
          <GroupBody $pl={12}>
            <Stack $w={200} $pt={17} $gap={12}>
              <ToolRow><Combo $w={198}>General<Down /></Combo></ToolRow>
              <ToolRow>
                <Tool><MoneyIcon /></Tool>
                <Tool $w={19}><Down /></Tool>
                <Tool $pb={1}><Glyph $size={23} $color="#666">%</Glyph></Tool>
                <Tool $pb={1}><CommaIcon /></Tool>
                <Rule $ml={4} />
                <Tool $ml={4} $pb={1}><DecimalIcon /></Tool>
                <Tool $pb={1}><DecimalIcon dec /></Tool>
              </ToolRow>
            </Stack>
          </GroupBody>
          <GroupFoot><GroupLabel>Number</GroupLabel><Launch /></GroupFoot>
        </Group>

        <Group $w={277}>
          <GroupBody $pl={12}>
            <BigButton $w={106}>
              <BigIcon $pl={3}><svg width="44" height="48"><g transform="translate(0 2)"><CondIcon /></g></svg></BigIcon>
              <BigLine>Conditional</BigLine>
              <BigLine>Formatting<Down /></BigLine>
            </BigButton>
            <BigButton $w={84}>
              <BigIcon $pl={4}><svg width="44" height="48"><g transform="translate(0 2)"><FormatTableIcon /></g></svg></BigIcon>
              <BigLine>Format as</BigLine>
              <BigLine>Table<Down /></BigLine>
            </BigButton>
            <BigButton $w={62}>
              <BigIcon $pl={1}><svg width="44" height="48"><g transform="translate(0 2)"><CellStylesIcon /></g></svg></BigIcon>
              <BigLine>Cell</BigLine>
              <BigLine $ls={-0.2}>Styles<Down /></BigLine>
            </BigButton>
          </GroupBody>
          <GroupFoot><GroupLabel>Styles</GroupLabel></GroupFoot>
        </Group>

        <Group $w={202}>
          <GroupBody $pl={13}>
            <BigButton $w={56}>
              <BigIcon><svg width="44" height="48"><g transform="translate(0 2)"><InsertIcon /></g></svg></BigIcon>
              <BigLine>Insert</BigLine>
              <BigLine><Down /></BigLine>
            </BigButton>
            <BigButton $w={58} $ml={1}>
              <BigIcon $pl={4}><svg width="44" height="48"><g transform="translate(0 2)"><DeleteIcon /></g></svg></BigIcon>
              <BigLine>Delete</BigLine>
              <BigLine><Down /></BigLine>
            </BigButton>
            <BigButton $w={62}>
              <BigIcon><svg width="42" height="48"><g transform="translate(0 1)"><FormatIcon /></g></svg></BigIcon>
              <BigLine $ls={-0.1}>Format</BigLine>
              <BigLine><Down /></BigLine>
            </BigButton>
          </GroupBody>
          <GroupFoot><GroupLabel>Cells</GroupLabel></GroupFoot>
        </Group>

        <Group $w={278}>
          <GroupBody $pl={16}>
            <Stack $w={128} $pt={4}>
              <ToolRow $h={31}><Tool $w={24}><SigmaIcon /></Tool><ToolText $w={88} $ml={4}>AutoSum</ToolText><Down /></ToolRow>
              <ToolRow $h={31}><Tool $w={24}><FillIcon /></Tool><ToolText $w={27} $ml={4}>Fill</ToolText><Down /></ToolRow>
              <ToolRow $h={31}><Tool $w={24}><ClearIcon /></Tool><ToolText $w={45} $ml={4} $ls={-0.4}>Clear</ToolText><Down /></ToolRow>
            </Stack>
            <BigButton $w={58}>
              <BigIcon><svg width="42" height="48"><g transform="translate(0 2)"><SortIcon /></g></svg></BigIcon>
              <BigLine>Sort &amp;</BigLine>
              <BigLine $ls={-0.1}>Filter<Down /></BigLine>
            </BigButton>
            <BigButton $w={60} $ml={2}>
              <BigIcon><svg width="42" height="48"><g transform="translate(0 3)"><FindIcon /></g></svg></BigIcon>
              <BigLine>Find &amp;</BigLine>
              <BigLine $ls={-0.3}>Select<Down /></BigLine>
            </BigButton>
          </GroupBody>
          <GroupFoot><GroupLabel>Editing</GroupLabel></GroupFoot>
        </Group>
        <Collapse><svg width="13" height="8"><path d="M1 7.500L6.500 1.500l5.500 6" fill="none" stroke="#777" strokeWidth="2.500" /></svg></Collapse>
      </Ribbon>

      <FormulaBar>
        <Field $w={152} $pad="0 10px 0 7px">B4<Down color="#777" /></Field>
        <Dots $margin="8px 0 0 20px"><i /></Dots>
        <Field $w={164} $ml={22} $pad="0 18px 1px 18px">
          <svg width="18" height="16" stroke="#c6c6c6" strokeWidth="2.300"><path d="M1 1L17 15M16 1L2 15" /></svg>
          <svg width="19" height="17" fill="none" stroke="#c6c6c6" strokeWidth="3"><path d="M1 9.500L7 15 18 1" /></svg>
          <Glyph $font={`"Liberation Serif", serif`} $style="italic" $weight={700} $size={23} $color="#666">fx</Glyph>
        </Field>
        <Field $w={1541} $ml={4} $justify="flex-end" $pad="0 7px 0 0">
          <svg width="12" height="8"><path d="M1 1l5 5 5-5" fill="none" stroke="#777" strokeWidth="2.800" /></svg>
        </Field>
      </FormulaBar>

      <SheetArea>
        <Grid>
          <Corner><svg width="67" height="67"><path d="M67 0V67H0z" fill="#b4b4b4" /></svg></Corner>
          <ColHead>A</ColHead>
          <ColHead $on>B</ColHead>
          <ColHead>C</ColHead>
          <ColHead>D</ColHead>
          <ColHead $last />
          {rows.map(([n, a, b], i) => {
            const cut = n === "8";
            return (
              <React.Fragment key={n}>
                <RowHead $on={n === "4"} $cut={cut}>{n}</RowHead>
                <Cell $cut={cut} $bold={i === 0}>{a}</Cell>
                <Cell $cut={cut} $bold={i === 0}>{b}{n === "4" && <Selection />}</Cell>
                <Cell $cut={cut} />
                <Cell $cut={cut} />
                <Cell $cut={cut} $last />
              </React.Fragment>
            );
          })}
        </Grid>
        <VScroll>
          <ScrollButton><Tri d="M0 8.500h11L5.500 2.500z" /></ScrollButton>
          <Thumb $w={25} $h={212} />
          <Spring />
          <ScrollButton><Tri d="M0 2.500h11L5.500 8.500z" /></ScrollButton>
        </VScroll>
      </SheetArea>

      <SheetBar>
        <SheetTabs>
          <SheetNav>
            <Tri w={6} h={11} d="M6 0V11L0 5.500z" color="#c0c0c0" />
            <Tri w={6} h={11} d="M0 0V11L6 5.500z" color="#c0c0c0" />
          </SheetNav>
          <SheetTab>Sheet1</SheetTab>
          <AddSheet><svg width="22" height="22" fill="none" stroke="#777"><circle cx="11" cy="11" r="10.300" strokeWidth="1.200" /><path d="M11 6V16M6 11H16" strokeWidth="1.700" /></svg></AddSheet>
        </SheetTabs>
        <HScrollArea>
          <Dots $h={15} $margin="9px 0 0 0"><i /></Dots>
          <HScroll>
            <ScrollButton><Tri w={7} d="M7 0V11L1 5.500z" /></ScrollButton>
            <Thumb $w={504} $h={25} />
            <Spring />
            <ScrollButton><Tri w={7} d="M0 0V11L6 5.500z" /></ScrollButton>
          </HScroll>
        </HScrollArea>
      </SheetBar>

      <StatusBar>
        <Ready>Ready</Ready>
        <ViewButton $on><svg width="19" height="19" fill="none" stroke="#666" strokeWidth="1.200"><path d="M.6.6H18.400V18.400H.6zM.6 6.500H18.400M.6 12.500H18.400M6.500.6V18.400M12.500.6V18.400" /></svg></ViewButton>
        <ViewButton><svg width="19" height="19" fill="none" stroke="#666" strokeWidth="1.200"><path d="M.6.6H18.400V18.400H.6zM4.600 3.600h9.800v11.800H4.600zM7 6.500h5M7 9.500h5M7 12.500h5" /></svg></ViewButton>
        <ViewButton><svg width="19" height="18" fill="none" stroke="#666" strokeWidth="1.200"><path d="M.6.6H18.400V17.400H.6zM.6 10.500H12.500V.6M6.500 .6V10.500" /></svg></ViewButton>
        <Zoom>
          <svg width="184" height="18"><path d="M0 8.500H11" stroke="#666" strokeWidth="2.500" /><path d="M17 8.500H165" stroke="#b0b0b0" strokeWidth="1.500" /><path d="M91 4.500V13" stroke="#b0b0b0" strokeWidth="1.500" /><path d="M127 0.500h8v17h-8z" fill="#666" /><path d="M171 8.500H183M177 3V14.500" stroke="#666" strokeWidth="2" /></svg>
        </Zoom>
        <Percent>265%</Percent>
      </StatusBar>

      <TaskBar>
        <Start><svg width="24" height="24" fill="#fff"><path d="M0 3.300L10 2v9.400H0zM11 1.800L24 0v11.400H11zM0 12.600H10V22L0 20.700zM11 12.600H24V24L11 22.200z" /></svg></Start>
        <Search $ls={0.2}>
          <svg width="25" height="25" fill="none" stroke="#222" strokeWidth="1.600"><circle cx="16" cy="8.500" r="7.700" /><path d="M10.500 14L.7 24" /></svg>
          Type here to search
        </Search>
        <TaskIcon $w={71}><svg width="24" height="24"><circle cx="12" cy="12" r="10.200" fill="none" stroke="#fff" strokeWidth="2.800" /></svg></TaskIcon>
        <TaskIcon $w={75}><svg width="25" height="24" fill="none" stroke="#fff" strokeWidth="1.300"><path d="M.6 0V3.500H15.500V0M.6 6.700H15.500V17H.6zM.6 24V20.300H15.500V24M22.500 0V6M22.500 12V24" /><path d="M21 7h4v3.500h-4z" fill="#fff" stroke="none" /></svg></TaskIcon>
        <TaskIcon $w={29} $pr={11}><svg width="6" height="36" stroke="#505050"><path d="M1 0V36M5 0V36" /></svg></TaskIcon>
        <TaskApp><VSCode /></TaskApp>
        <TaskApp><GitHub /></TaskApp>
        <TaskApp><Chrome /></TaskApp>
        <TaskApp $split $pr={4}><Cmd /></TaskApp>
        <TaskApp $pr={2}><Explorer /></TaskApp>
        <TaskApp $mr={8} $pr={2}><Photos /></TaskApp>
        <TaskApp $on $pr={3}><ExcelIcon /></TaskApp>
        <TaskIcon $w={30} $ml={215}><svg width="30" height="28"><circle cx="14" cy="13.500" r="12" fill="#1593d6" stroke="#fff" strokeWidth="2.300" /><text x="14" y="20.500" textAnchor="middle" fontFamily="Noto Sans" fontWeight="700" fontSize="19" fill="#fff">?</text><circle cx="23.500" cy="20" r="6" fill="#fbb117" /><text x="23.500" y="24" textAnchor="middle" fontFamily="Noto Sans" fontWeight="700" fontSize="10" fill="#fff">i</text></svg></TaskIcon>
        <TaskIcon $w={18} $ml={12}><svg width="18" height="10"><path d="M1 9.500L9 1l8 8.500" fill="none" stroke="#fff" strokeWidth="1.500" /></svg></TaskIcon>
        <TaskIcon $w={20} $ml={18}><svg width="19" height="19" fill="none" stroke="#ddd" strokeWidth="1.300"><path d="M1 18Q1 3 18 1.500" opacity=".8" /><path d="M5 18Q5 8 18 6M9.500 18Q10 12.500 18 11" /><circle cx="16" cy="16.500" r="1.800" fill="#fff" stroke="none" /></svg></TaskIcon>
        <TaskIcon $w={24} $ml={13}><svg width="24" height="17" fill="none" stroke="#fff" strokeWidth="1.200"><path d="M8 4.500H22.500V15.500H4.500V10M23.500 8v4M1.500 0V3M6 0V3M.6 3H7V7Q7 9 3.800 9T.6 7z" /><path d="M9 6.500h11.500v7H7V10z" fill="#fff" stroke="none" /></svg></TaskIcon>
        <TaskIcon $w={24} $ml={12}><svg width="23" height="20" fill="none" stroke="#fff" strokeWidth="1.300"><path d="M.7 6.500H4.500L9.500 1.500V18.500L4.500 13.500H.7zM13 7q2 3 0 6M16 4.500q4 5.500 0 11M19 2q6 8 0 16" /></svg></TaskIcon>
        <Language $ls={-0.4}>ENG</Language>
        <Clock $ls={0}>17:34<br />29-09-2019</Clock>
        <TaskIcon $w={36} $ml={27}><svg width="36" height="36"><path d="M0 0H24V20H14L10 25V20H0z" fill="#fff" /><path d="M4.500 5.500H19M4.500 10H19M4.500 14.500H14" stroke="#222" strokeWidth="1.300" /><circle cx="23.500" cy="24" r="11.800" fill="#2b2b2b" stroke="#999" /><text x="23.500" y="30" textAnchor="middle" fontFamily="Noto Sans" fontWeight="600" fontSize="16" fill="#fff">1</text></svg></TaskIcon>
        <ShowDesktop />
      </TaskBar>
    </Screen>
  );
}
